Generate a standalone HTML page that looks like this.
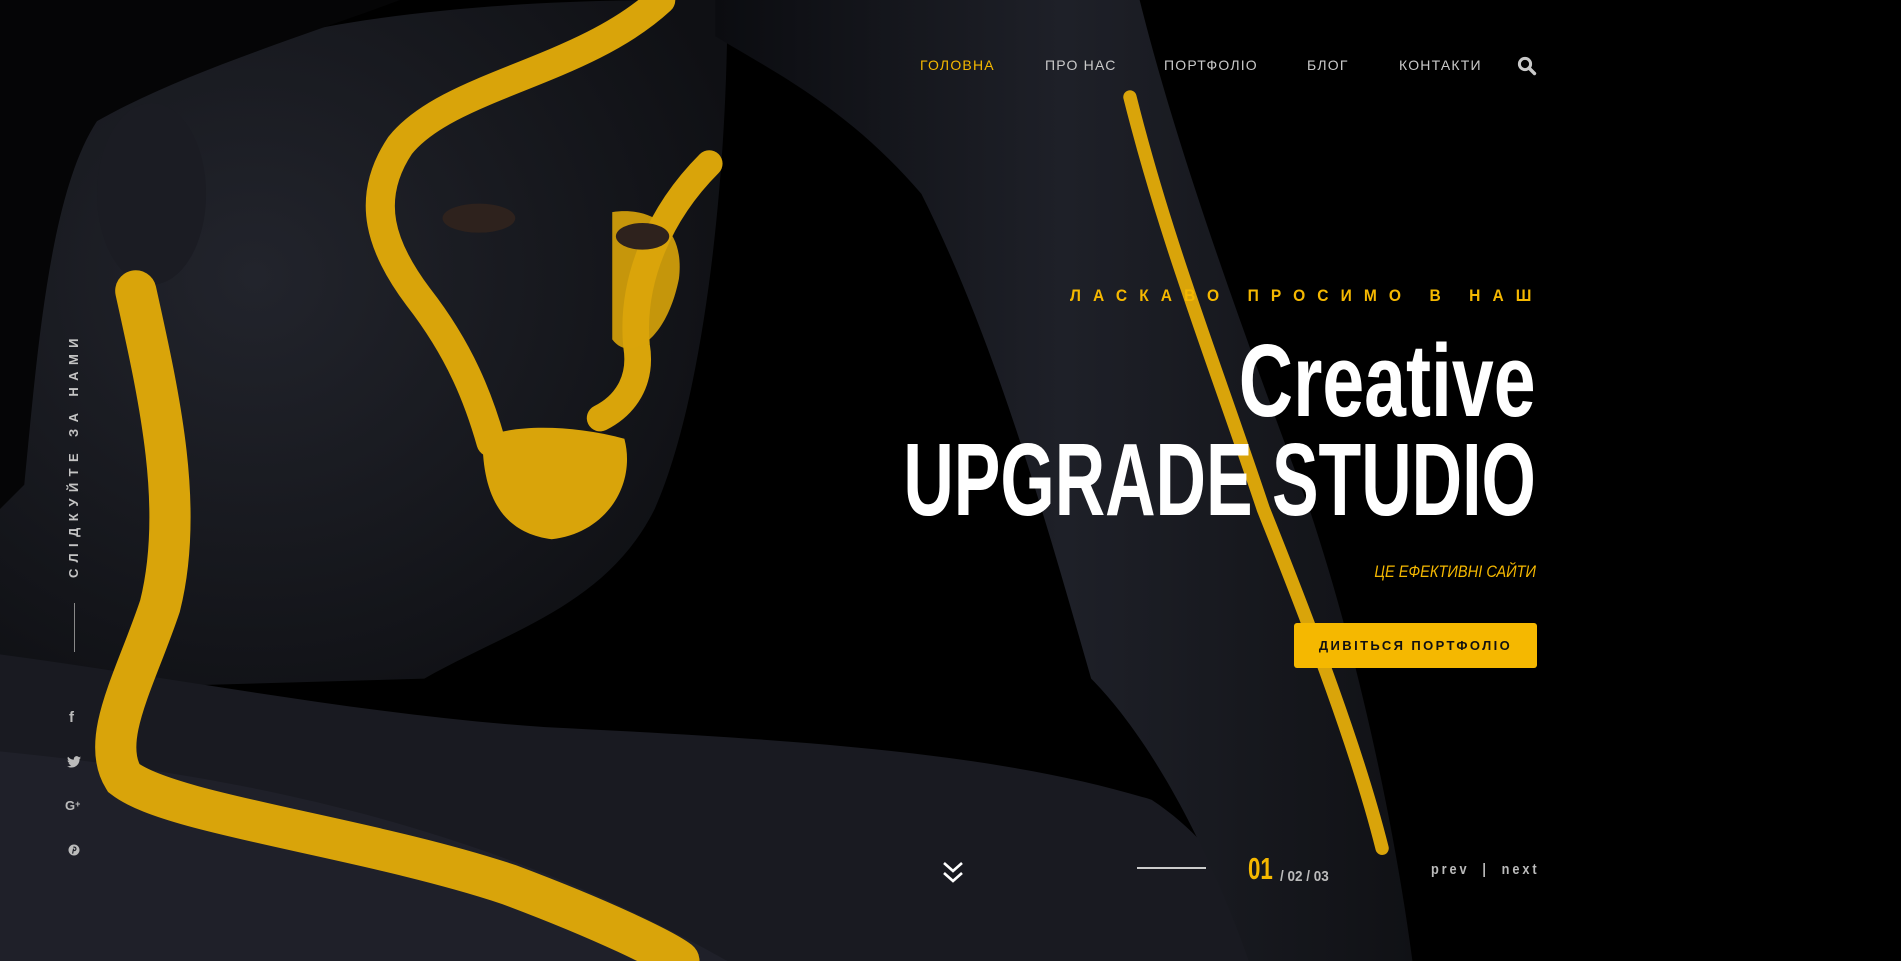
<!DOCTYPE html>
<html><head><meta charset="utf-8">
<style>
html,body{margin:0;padding:0;}
body{width:1901px;height:961px;overflow:hidden;background:#000;position:relative;font-family:"Liberation Sans",sans-serif;}
.bg{position:absolute;left:0;top:0;width:1901px;height:961px;}
.abs{position:absolute;white-space:nowrap;}
.nav{top:56px;font-size:14px;letter-spacing:1.2px;color:#c9c9c9;line-height:18px;}
.h{font-weight:bold;color:#fff;font-size:103px;line-height:1;transform-origin:right center;right:365px;}
</style></head><body>
<svg class="bg" viewBox="0 0 1568 793" preserveAspectRatio="none" xmlns="http://www.w3.org/2000/svg">
<defs>
<radialGradient id="sk" cx="0.35" cy="0.4" r="0.7">
<stop offset="0" stop-color="#22242c"/><stop offset="1" stop-color="#0f1014"/>
</radialGradient>
<linearGradient id="arm" x1="0" y1="0" x2="1" y2="0">
<stop offset="0" stop-color="#0b0c10"/><stop offset="0.5" stop-color="#1e2028"/><stop offset="1" stop-color="#101115"/>
</linearGradient>
</defs>
<rect width="1568" height="793" fill="#000"/>
<path d="M70,110 C120,40 300,0 560,0 L600,0 C600,150 580,330 540,420 C500,500 420,520 350,560 L0,570 L0,140 Z" fill="url(#sk)"/>
<path d="M0,0 L330,0 C250,30 150,60 80,100 C40,160 30,300 20,400 L0,420 Z" fill="#050506"/>
<ellipse cx="125" cy="160" rx="45" ry="75" fill="#1b1c23"/>
<path d="M0,540 C150,560 300,590 450,600 C650,610 820,620 950,660 C1010,700 1030,750 1040,793 L0,793 Z" fill="#191a21"/>
<path d="M0,620 C200,640 400,680 600,793 L0,793 Z" fill="#1f2029"/>
<path d="M590,0 L940,0 C970,120 1020,260 1080,420 C1120,540 1150,680 1165,793 L1030,793 C990,680 940,600 900,560 C860,420 820,280 760,160 C700,90 640,60 590,30 Z" fill="url(#arm)"/>
<g fill="none" stroke="#d9a40a" stroke-linecap="round">
<path d="M545,0 C480,60 370,70 330,120 C300,165 315,205 345,245 C380,290 395,330 405,365" stroke-width="24"/>
<path d="M585,135 C545,175 520,230 525,285 C530,315 515,335 495,345" stroke-width="22"/>
<path d="M112,240 C132,330 152,420 132,500 C112,560 82,610 102,642 C140,672 300,690 420,730 C500,760 550,785 560,793" stroke-width="34"/>
<path d="M932,80 C962,200 1002,300 1042,420 C1082,520 1120,620 1140,700" stroke-width="11"/>
</g>
<path d="M505,175 C540,170 565,190 560,230 C550,280 520,300 505,280 Z" fill="#d9a40a" opacity="0.9"/>
<path d="M398,362 C420,350 470,350 515,362 C525,400 500,440 455,445 C415,440 398,410 398,362 Z" fill="#d9a40a"/>
<ellipse cx="395" cy="180" rx="30" ry="12" fill="#2e221d"/>
<ellipse cx="530" cy="195" rx="22" ry="11" fill="#2e221d"/>
</svg>

<div class="abs nav" style="left:920px;color:#f5b800;">ГОЛОВНА</div>
<div class="abs nav" style="left:1045px;">ПРО НАС</div>
<div class="abs nav" style="left:1164px;">ПОРТФОЛІО</div>
<div class="abs nav" style="left:1307px;">БЛОГ</div>
<div class="abs nav" style="left:1399px;">КОНТАКТИ</div>
<svg class="abs" style="left:1517px;top:56px;" width="20" height="20" viewBox="0 0 20 20"><circle cx="8" cy="8" r="5.6" fill="none" stroke="#c9c9c9" stroke-width="3"/><path d="M12,12 L17.5,17.5" stroke="#c9c9c9" stroke-width="3.4" stroke-linecap="round"/></svg>

<div class="abs" style="right:370px;top:287px;font-size:17px;font-weight:bold;letter-spacing:13.2px;color:#f5b800;line-height:18px;transform:scaleX(0.915);transform-origin:right center;margin-right:-13px;">ЛАСКАВО ПРОСИМО В НАШ</div>
<div class="abs h" style="top:329px;transform:scaleX(0.73);">Creative</div>
<div class="abs h" style="top:428px;transform:scaleX(0.678);">UPGRADE STUDIO</div>
<div class="abs" style="right:365px;top:563px;font-size:17px;font-style:italic;color:#f5b800;line-height:18px;transform:scaleX(0.86);transform-origin:right center;">ЦЕ ЕФЕКТИВНІ САЙТИ</div>
<div class="abs" style="left:1294px;top:623px;width:243px;height:45px;background:#f5b800;border-radius:3px;color:#111;font-size:13px;font-weight:bold;letter-spacing:2.4px;line-height:45px;text-align:center;">ДИВІТЬСЯ ПОРТФОЛІО</div>

<div class="abs" style="left:74px;top:455px;transform:translate(-50%,-50%) rotate(-90deg);font-size:13px;font-weight:bold;letter-spacing:6.4px;color:#c4c4c4;line-height:14px;">СЛІДКУЙТЕ ЗА НАМИ</div>
<div class="abs" style="left:74px;top:603px;width:1px;height:49px;background:#888;"></div>
<div class="abs" style="left:69px;top:709px;font-size:15px;font-weight:bold;color:#bbb;">f</div>
<svg class="abs" style="left:67px;top:756px;" width="14" height="12" viewBox="0 0 24 20"><path d="M24,2.4c-.9.4-1.8.7-2.8.8 1-.6 1.8-1.6 2.2-2.7-1 .6-2 1-3.1 1.2C19.3.7 18 0 16.6 0c-2.7 0-4.9 2.2-4.9 4.9 0 .4 0 .8.1 1.1C7.7 5.8 4.1 3.9 1.7.9c-.4.7-.7 1.6-.7 2.5 0 1.700.9 3.2 2.2 4.1-.8 0-1.600-.2-2.200-.6v.1c0 2.400 1.700 4.400 3.900 4.800-.4.1-.8.2-1.300.2-.3 0-.6 0-.9-.1.6 2 2.400 3.400 4.600 3.400-1.700 1.300-3.800 2.100-6.100 2.100-.4 0-.8 0-1.200-.1 2.200 1.400 4.800 2.200 7.500 2.200 9.100 0 14-7.500 14-14v-.6c1-.7 1.800-1.600 2.500-2.500z" fill="#bbb"/></svg>
<div class="abs" style="left:65px;top:798px;font-size:13px;font-weight:bold;color:#bbb;">G<span style="font-size:9px;vertical-align:3px;">+</span></div>
<svg class="abs" style="left:68px;top:844px;" width="12" height="12" viewBox="0 0 12 12"><circle cx="6" cy="6" r="5.5" fill="#bbb"/><path d="M5.3,3.2c1.8-.4 2.9.6 2.6 2-.3 1.3-1.5 1.6-2.2 1.1M5.6,4.6 L4.6,9.6" stroke="#1f2129" stroke-width="1.2" fill="none"/></svg>

<svg class="abs" style="left:941px;top:861px;" width="24" height="23" viewBox="0 0 24 23"><path d="M3,2 L12,10 L21,2 M3,12 L12,20 L21,12" fill="none" stroke="#fff" stroke-width="2.6"/></svg>
<div class="abs" style="left:1137px;top:867px;width:69px;height:2px;background:#ccc;"></div>
<div class="abs" style="left:1248px;top:852px;font-size:31px;font-weight:bold;color:#f5b800;line-height:34px;transform:scaleX(0.72);transform-origin:left center;">01</div>
<div class="abs" style="left:1280px;top:869px;font-size:15px;font-weight:bold;color:#bbb;line-height:16px;transform:scaleX(0.9);transform-origin:left center;">/ 02 / 03</div>
<div class="abs" style="left:1431px;top:862px;font-size:15px;font-weight:bold;color:#bbb;letter-spacing:3.4px;line-height:16px;transform:scaleX(0.85);transform-origin:left center;">prev&nbsp;&nbsp;|&nbsp;&nbsp;next</div>
</body></html>
